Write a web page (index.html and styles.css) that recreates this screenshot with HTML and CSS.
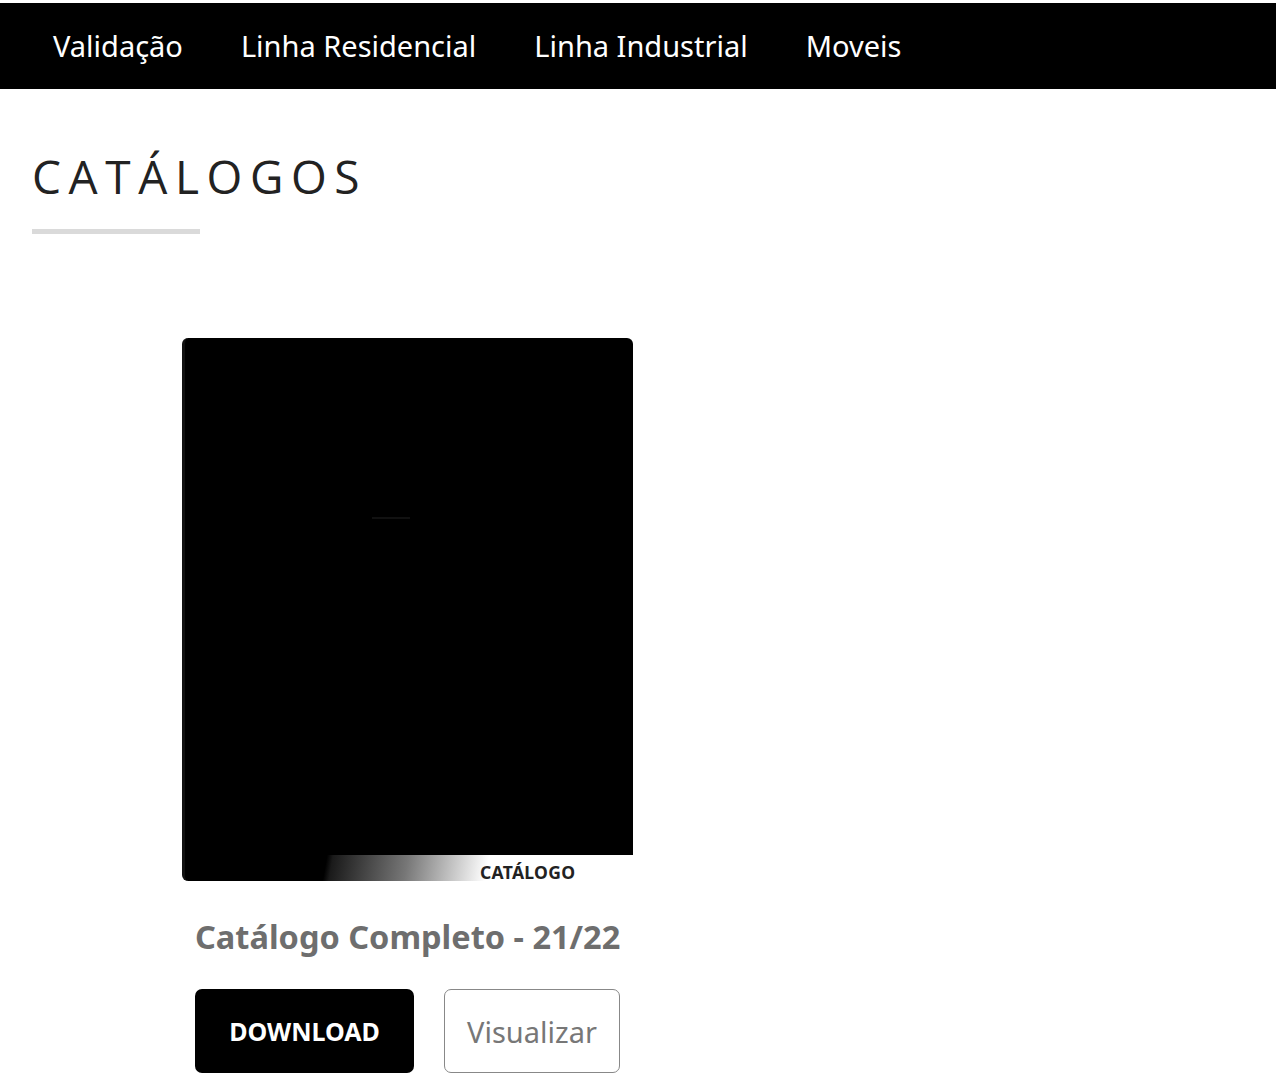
FILE: index.html
```html
<!DOCTYPE html>
<html lang="pt">
<head>
<meta charset="utf-8">
<title>Catálogos</title>
<link rel="stylesheet" href="styles.css">
</head>
<body>
<nav class="topnav">
  <a class="nav-link" href="#">Validação</a>
  <a class="nav-link" href="#">Linha Residencial</a>
  <a class="nav-link" href="#">Linha Industrial</a>
  <a class="nav-link" href="#">Moveis</a>
</nav>
<main class="page">
  <h1 class="page-title">CATÁLOGOS</h1>
  <div class="title-rule"></div>
  <section class="catalog-grid">
    <article class="catalog-card">
      <div class="cover">
        <div class="cover-mark"></div>
        <div class="cover-strip">
          <span class="cover-label">CATÁLOGO</span>
        </div>
      </div>
      <h2 class="card-title">Catálogo Completo - 21/22</h2>
      <div class="card-actions">
        <a class="btn btn-dark" href="#">DOWNLOAD</a>
        <a class="btn btn-outline" href="#">Visualizar</a>
      </div>
    </article>
  </section>
</main>
</body>
</html>
```

FILE: styles.css
```css
* { box-sizing: border-box; }
html, body { margin: 0; padding: 0; background: #fff; }
body { font-family: "Noto Sans", "Open Sans", sans-serif; padding-top: 3px; }

.topnav {
  background: #000;
  height: 86px;
  display: flex;
  align-items: center;
  padding-left: 24px;
}
.nav-link {
  color: #fff;
  text-decoration: none;
  font-size: 29px;
  padding: 0 29px;
  line-height: 1;
  position: relative;
  top: -1px;
}

.page { padding: 0 32px; }
.page-title {
  margin: 54px 0 0;
  font-family: "Open Sans", "Noto Sans", sans-serif;
  font-weight: 400;
  font-size: 46px;
  letter-spacing: 7.6px;
  line-height: 66px;
  color: #222;
}
.title-rule {
  width: 168px;
  height: 5px;
  background: #dadada;
  margin-top: 20px;
}

.catalog-grid {
  display: flex;
  padding-left: 150px;
  margin-top: 104px;
}
.catalog-card { width: 451px; display: flex; flex-direction: column; }
.cover {
  height: 543px;
  background: #000;
  border-radius: 6px;
  position: relative;
  display: flex;
  flex-direction: column;
  justify-content: flex-end;
  border-left: 3px solid #111;
}
.cover-mark {
  position: absolute;
  left: 187px;
  top: 179px;
  width: 38px;
  height: 2px;
  background: #111;
}
.cover-strip {
  height: 26px;
  display: flex;
  align-items: flex-end;
  background: linear-gradient(100deg, #000 0, #000 140px, #1a1a1a 146px, #777 220px, #ddd 280px, #fff 300px);
  border-bottom-left-radius: 6px;
  padding-left: 295px;
}
.cover-label {
  font-family: "Noto Sans", sans-serif;
  font-weight: 700;
  font-size: 17.5px;
  line-height: 1;
  color: #222;
  letter-spacing: 0.3px;
}

.card-title {
  margin: 34px 0 0 13px;
  font-size: 32.5px;
  font-weight: 700;
  color: #6e6e6e;
  line-height: 44px;
}
.card-actions {
  display: flex;
  gap: 30px;
  margin: 30px 0 0 13px;
}
.btn {
  display: flex;
  align-items: center;
  justify-content: center;
  height: 84px;
  border-radius: 7px;
  text-decoration: none;
}
.btn-dark {
  width: 219px;
  background: #000;
  color: #fff;
  font-weight: 700;
  font-size: 25px;
}
.btn-outline {
  width: 176px;
  border: 1.5px solid #888;
  color: #777;
  font-size: 29px;
}
```
